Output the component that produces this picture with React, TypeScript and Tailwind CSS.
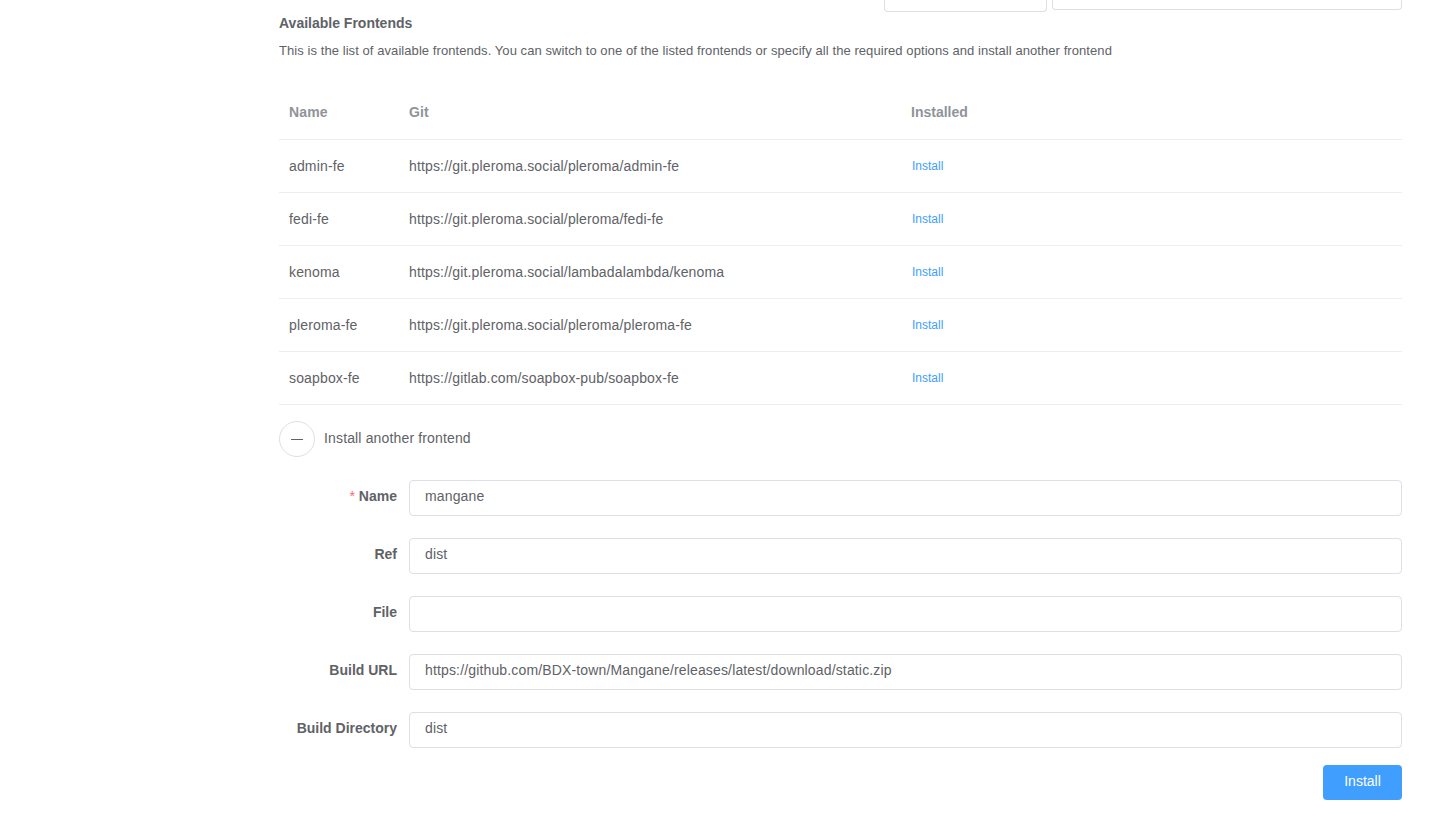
import React from 'react';

const frontends = [
  { name: 'admin-fe', git: 'https://git.pleroma.social/pleroma/admin-fe' },
  { name: 'fedi-fe', git: 'https://git.pleroma.social/pleroma/fedi-fe' },
  { name: 'kenoma', git: 'https://git.pleroma.social/lambadalambda/kenoma' },
  { name: 'pleroma-fe', git: 'https://git.pleroma.social/pleroma/pleroma-fe' },
  { name: 'soapbox-fe', git: 'https://gitlab.com/soapbox-pub/soapbox-fe' },
];

const fields = [
  { label: 'Name', value: 'mangane', required: true },
  { label: 'Ref', value: 'dist' },
  { label: 'File', value: '' },
  { label: 'Build URL', value: 'https://github.com/BDX-town/Mangane/releases/latest/download/static.zip' },
  { label: 'Build Directory', value: 'dist' },
];

export default function App() {
  return (
    <div
      className="min-h-screen bg-white pl-[279px] pr-[30px] text-[#606266]"
      style={{ fontFamily: '"Liberation Sans", Arial, sans-serif' }}
    >
      {/* cut-off inputs from the section above */}
      <div className="flex items-start justify-end gap-[5px]">
        <div className="w-[163px] h-[12px] border border-t-0 border-[#DCDFE6] rounded-b-[4px]" />
        <div className="w-[350px] h-[10px] border border-t-0 border-[#DCDFE6] rounded-b-[4px]" />
      </div>

      <h2 className="text-[14px] font-bold leading-5 mt-[1px]">Available Frontends</h2>
      <p className="mt-[8px] text-[13px] leading-5 tracking-[0.07px]">
        This is the list of available frontends. You can switch to one of the listed frontends or specify all the required
        options and install another frontend
      </p>

      {/* Table */}
      <div className="mt-[26px] text-[14px] tracking-[0.15px]">
        <div className="flex items-center h-[53px] border-b border-[#EBEEF5] font-bold text-[#909399] pb-[2px]">
          <div className="w-[120px] px-[10px]">Name</div>
          <div className="w-[502px] px-[10px]">Git</div>
          <div className="flex-1 px-[10px] tracking-normal">Installed</div>
        </div>
        {frontends.map((f) => (
          <div key={f.name} className="flex items-center h-[53px] border-b border-[#EBEEF5]">
            <div className="w-[120px] px-[10px]">{f.name}</div>
            <div className="w-[502px] px-[10px]">{f.git}</div>
            <div className="flex-1 px-[11px] pb-[2px]">
              <span className="text-[12px] text-[#409EFF] tracking-normal">Install</span>
            </div>
          </div>
        ))}
      </div>

      {/* Collapse toggle */}
      <div className="mt-[16px] flex items-center gap-[9px]">
        <button className="w-[36px] h-[36px] rounded-full border border-[#DCDFE6] flex items-center justify-center">
          <span className="block w-[12px] h-[1px] bg-[#606266]" />
        </button>
        <span className="text-[14px] tracking-[0.15px] pb-[1px]">Install another frontend</span>
      </div>

      {/* Form */}
      <div className="mt-[23px] flex flex-col gap-[22px]">
        {fields.map((f) => (
          <div key={f.label} className="flex items-center">
            <label className="w-[130px] pr-[12px] pb-[3px] text-right text-[14px] font-bold">
              {f.required && <span className="text-[#F56C6C] font-normal mr-[4px]">*</span>}
              {f.label}
            </label>
            <div className="flex-1 h-[36px] border border-[#DCDFE6] rounded-[4px] px-[15px] pb-[3px] flex items-center text-[14px] tracking-[0.15px]">
              {f.value}
            </div>
          </div>
        ))}
      </div>

      <div className="mt-[17px] flex justify-end">
        <button className="w-[79px] h-[35px] rounded-[4px] bg-[#409EFF] text-white text-[14px] pb-[2px]">Install</button>
      </div>
    </div>
  );
}
